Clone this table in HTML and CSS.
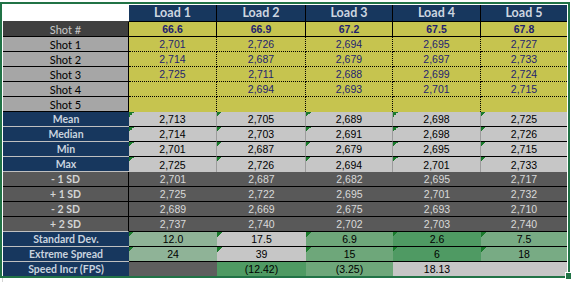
FILE: index.html
```html
<!DOCTYPE html>
<html lang="en">
<head>
<meta charset="utf-8">
<title>Load comparison</title>
<link rel="stylesheet" href="styles.css">
</head>
<body>
<div class="frame">
  <div class="sheet">
    <!-- header -->
    <div class="c corner"></div>
    <div class="c head">Load 1</div>
    <div class="c head">Load 2</div>
    <div class="c head">Load 3</div>
    <div class="c head">Load 4</div>
    <div class="c head last">Load 5</div>

    <!-- Shot # -->
    <div class="c lbl-shotno">Shot #</div>
    <div class="c ynum bold solid">66.6</div>
    <div class="c ynum bold solid">66.9</div>
    <div class="c ynum bold solid">67.2</div>
    <div class="c ynum bold solid">67.5</div>
    <div class="c ynum bold solid last">67.8</div>

    <!-- Shots -->
    <div class="c lbl-shot">Shot 1</div>
    <div class="c ynum dot">2,701</div>
    <div class="c ynum dot">2,726</div>
    <div class="c ynum dot">2,694</div>
    <div class="c ynum dot">2,695</div>
    <div class="c ynum dot last">2,727</div>

    <div class="c lbl-shot">Shot 2</div>
    <div class="c ynum dot">2,714</div>
    <div class="c ynum dot">2,687</div>
    <div class="c ynum dot">2,679</div>
    <div class="c ynum dot">2,697</div>
    <div class="c ynum dot last">2,733</div>

    <div class="c lbl-shot">Shot 3</div>
    <div class="c ynum dot">2,725</div>
    <div class="c ynum dot">2,711</div>
    <div class="c ynum dot">2,688</div>
    <div class="c ynum dot">2,699</div>
    <div class="c ynum dot last">2,724</div>

    <div class="c lbl-shot">Shot 4</div>
    <div class="c ynum dot"></div>
    <div class="c ynum dot">2,694</div>
    <div class="c ynum dot">2,693</div>
    <div class="c ynum dot">2,701</div>
    <div class="c ynum dot last">2,715</div>

    <div class="c lbl-shot">Shot 5</div>
    <div class="c ynum dot nob"></div>
    <div class="c ynum dot nob"></div>
    <div class="c ynum dot nob"></div>
    <div class="c ynum dot nob"></div>
    <div class="c ynum dot nob last"></div>

    <!-- Stats -->
    <div class="c lbl-navy">Mean</div>
    <div class="c stat tri">2,713</div>
    <div class="c stat tri">2,705</div>
    <div class="c stat tri">2,689</div>
    <div class="c stat tri">2,698</div>
    <div class="c stat tri last">2,725</div>

    <div class="c lbl-navy">Median</div>
    <div class="c stat tri">2,714</div>
    <div class="c stat tri">2,703</div>
    <div class="c stat tri">2,691</div>
    <div class="c stat tri">2,698</div>
    <div class="c stat tri last">2,726</div>

    <div class="c lbl-navy">Min</div>
    <div class="c stat tri">2,701</div>
    <div class="c stat tri">2,687</div>
    <div class="c stat tri">2,679</div>
    <div class="c stat tri">2,695</div>
    <div class="c stat tri last">2,715</div>

    <div class="c lbl-navy">Max</div>
    <div class="c stat tri nob">2,725</div>
    <div class="c stat tri nob">2,726</div>
    <div class="c stat tri nob">2,694</div>
    <div class="c stat tri nob">2,701</div>
    <div class="c stat tri nob last">2,733</div>

    <!-- SD -->
    <div class="c lbl-sd">- 1 SD</div>
    <div class="c sd">2,701</div>
    <div class="c sd">2,687</div>
    <div class="c sd">2,682</div>
    <div class="c sd">2,695</div>
    <div class="c sd">2,717</div>

    <div class="c lbl-sd">+ 1 SD</div>
    <div class="c sd">2,725</div>
    <div class="c sd">2,722</div>
    <div class="c sd">2,695</div>
    <div class="c sd">2,701</div>
    <div class="c sd">2,732</div>

    <div class="c lbl-sd">- 2 SD</div>
    <div class="c sd">2,689</div>
    <div class="c sd">2,669</div>
    <div class="c sd">2,675</div>
    <div class="c sd">2,693</div>
    <div class="c sd">2,710</div>

    <div class="c lbl-sd lightb">+ 2 SD</div>
    <div class="c sd">2,737</div>
    <div class="c sd">2,740</div>
    <div class="c sd">2,702</div>
    <div class="c sd">2,703</div>
    <div class="c sd">2,740</div>

    <!-- spread -->
    <div class="c lbl-navy">Standard Dev.</div>
    <div class="c sp tri g1">12.0</div>
    <div class="c sp tri gray">17.5</div>
    <div class="c sp tri g3">6.9</div>
    <div class="c sp tri g4">2.6</div>
    <div class="c sp tri g2">7.5</div>

    <div class="c lbl-navy">Extreme Spread</div>
    <div class="c sp tri g1">24</div>
    <div class="c sp tri gray">39</div>
    <div class="c sp tri g3">15</div>
    <div class="c sp tri g4">6</div>
    <div class="c sp tri g2">18</div>

    <div class="c lbl-navy nob">Speed Incr (FPS)</div>
    <div class="c sp nob dark"></div>
    <div class="c sp nob g4">(12.42)</div>
    <div class="c sp nob g3">(3.25)</div>
    <div class="c sp nob gray">18.13</div>
    <div class="c sp nob gray"></div>
  </div>
  <div class="handle"></div>
</div>
<div class="gridline"></div>
</body>
</html>
```

FILE: styles.css
```css
html, body {
  margin: 0;
  padding: 0;
  background: #ffffff;
}

body {
  width: 571px;
  height: 282px;
  overflow: hidden;
  font-family: "Liberation Sans", Arial, sans-serif;
}

.frame {
  position: relative;
  width: 566px;
  margin-top: 2px;
  border: 2px solid #217346;
  padding: 1px 1px 0 1px;
  box-sizing: content-box;
  width: 564px;
}

.handle {
  position: absolute;
  right: -4px;
  bottom: -3px;
  width: 6px;
  height: 6px;
  background: #217346;
  box-shadow: 0 0 0 1px #ffffff;
}

.gridline {
  width: 1px;
  height: 6px;
  margin-left: 2px;
  background: #d4d4d4;
}

.sheet {
  display: grid;
  grid-template-columns: 126px 88px 89px 87px 88px 86px;
  grid-template-rows: 17px repeat(16, 15px) 14px;
}

.c {
  box-sizing: border-box;
  display: flex;
  align-items: center;
  justify-content: center;
  white-space: nowrap;
  font-size: 10.5px;
  line-height: 1;
  padding-top: 1px;
}

/* header */
.corner {
  background: #ffffff;
  border-bottom: 1px solid #404040;
}

.head {
  background: #17375e;
  color: #cdd6e0;
  font-family: Lato, "Liberation Sans", sans-serif;
  font-weight: 700;
  font-size: 12.5px;
  border-right: 1px solid #000000;
  border-bottom: 1px solid #000000;
}

.last {
  border-right: none;
}

/* labels */
.lbl-shotno {
  background: #404040;
  color: #c8c8c8;
  font-family: Lato, "Liberation Sans", sans-serif;
  font-size: 11px;
  border-right: 1px solid #000000;
  border-bottom: 1px solid #000000;
}

.lbl-shot {
  background: #a6a6a6;
  color: #000000;
  font-family: Lato, "Liberation Sans", sans-serif;
  font-size: 11px;
  border-right: 1px solid #000000;
  border-bottom: 1px solid #000000;
}

.lbl-navy {
  background: #17375e;
  color: #c9d3de;
  font-family: Lato, "Liberation Sans", sans-serif;
  font-weight: 700;
  font-size: 10.5px;
  border-bottom: 1px solid #c0c0c0;
}

.lbl-sd {
  background: #595959;
  color: #d4d4d4;
  font-family: Lato, "Liberation Sans", sans-serif;
  font-weight: 700;
  font-size: 10.5px;
  border-right: 1px solid #000000;
  border-bottom: 1px solid #000000;
}

.lbl-sd.lightb {
  border-bottom-color: #c0c0c0;
}

/* yellow values */
.ynum {
  background: #c6c44f;
  color: #1f1f70;
}

.ynum.bold {
  font-weight: 700;
}

.ynum.solid {
  border-right: 1px solid #000000;
  border-bottom: 1px solid #000000;
}

.ynum.dot {
  border-right: 1px dotted #000000;
  border-bottom: 1px dotted #000000;
}

.ynum.last {
  border-right: none;
}

.nob {
  border-bottom: none !important;
}

/* stats */
.stat {
  background-color: #c6c6c6;
  color: #000000;
  border-right: 1px solid #9c9c9c;
  border-bottom: 1px solid #000000;
}

.stat.last {
  border-right: none;
}

.tri {
  background-image: linear-gradient(135deg, #1a7a2c 50%, transparent 50%);
  background-size: 5px 5px;
  background-repeat: no-repeat;
}

.sd {
  background: #595959;
  color: #d9d9d9;
  border-bottom: 1px solid #000000;
}

.sp {
  color: #000000;
  border-bottom: 1px solid #000000;
}

.g1 { background-color: #8fb397; }
.g2 { background-color: #78ab84; }
.g3 { background-color: #6ea77a; }
.g4 { background-color: #4f9a63; }
.gray { background-color: #c6c6c6; }
.dark { background-color: #5e5e5e; }
```
